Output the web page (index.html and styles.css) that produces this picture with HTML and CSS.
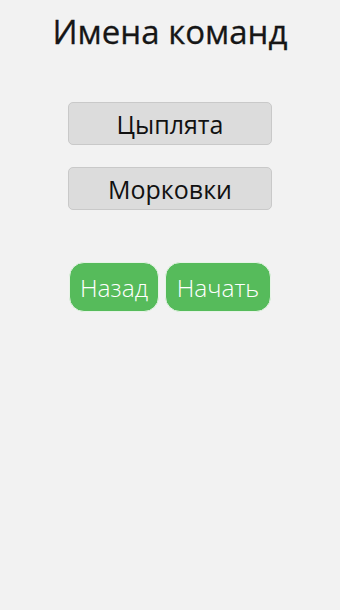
FILE: index.html
```html
<!DOCTYPE html>
<html lang="ru">
<head>
<meta charset="utf-8">
<link rel="stylesheet" href="styles.css">
</head>
<body>
<div class="page">
  <h1 class="title">Имена команд</h1>
  <div class="fields">
    <input class="field" type="text" value="Цыплята">
    <input class="field" type="text" value="Морковки">
  </div>
  <div class="actions">
    <button class="btn btn-back">Назад</button>
    <button class="btn btn-start">Начать</button>
  </div>
</div>
</body>
</html>
```
FILE: styles.css
```css
html, body {
  margin: 0;
  padding: 0;
  background: #f2f2f2;
}
.page {
  width: 340px;
  height: 610px;
  display: flex;
  flex-direction: column;
  align-items: center;
  font-family: "Open Sans", sans-serif;
}
.title {
  margin: 10px 0 0 0;
  font-size: 33px;
  font-weight: 400;
  line-height: 44px;
  color: #161616;
  text-align: center;
  -webkit-text-stroke: 0.3px #161616;
}
.fields {
  display: flex;
  flex-direction: column;
  gap: 22px;
  margin-top: 48px;
}
.field {
  box-sizing: border-box;
  width: 204px;
  height: 43px;
  margin: 0;
  padding: 0;
  border: 1px solid #c9c9c9;
  border-radius: 5px;
  background: #dcdcdc;
  font-family: "Open Sans", sans-serif;
  font-size: 25px;
  color: #111;
  text-align: center;
  outline: none;
}
.actions {
  display: flex;
  gap: 6px;
  margin-top: 52px;
}
.btn {
  box-sizing: border-box;
  height: 50px;
  margin: 0;
  padding: 0 8px;
  border: 1px solid #e6f4e6;
  border-radius: 15px;
  background: #56bb5b;
  color: #fff;
  font-family: "Open Sans", sans-serif;
  font-weight: 300;
  font-size: 24.5px;
}
.btn-back { width: 90px; }
.btn-start { width: 106px; }
```
